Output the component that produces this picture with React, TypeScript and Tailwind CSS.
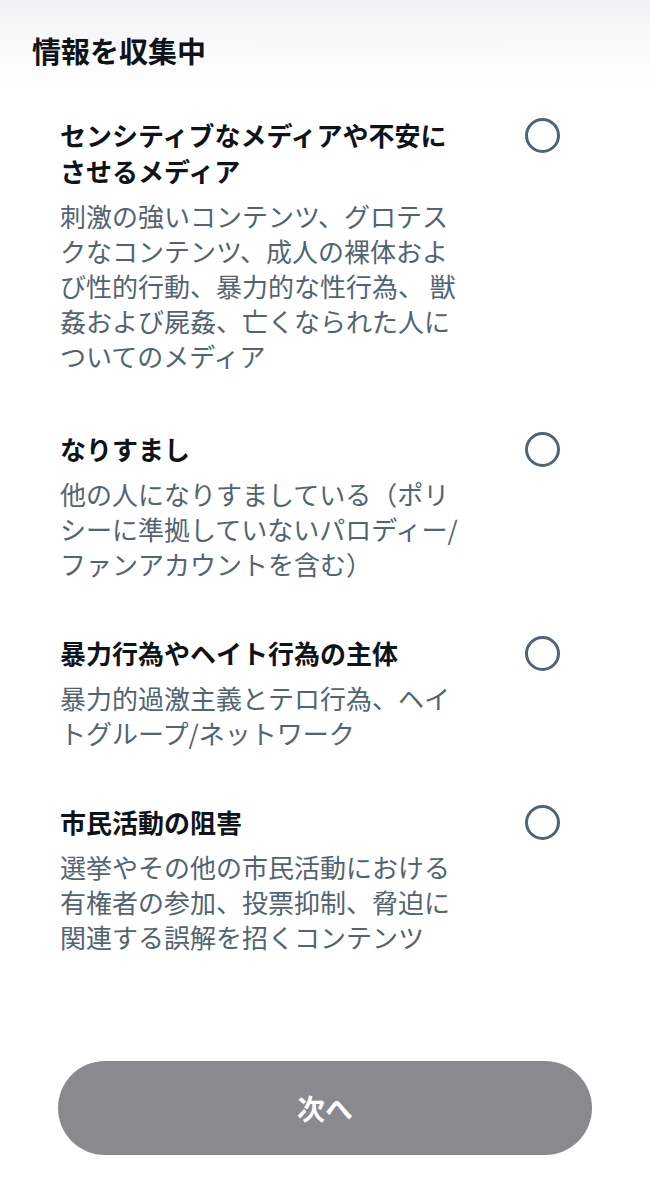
import React from 'react';

const items = [
  {
    title: ['センシティブなメディアや不安に', 'させるメディア'],
    desc: [
      '刺激の強いコンテンツ、グロテス',
      'クなコンテンツ、成人の裸体およ',
      'び性的行動、暴力的な性行為、 獣',
      '姦および屍姦、亡くなられた人に',
      'ついてのメディア',
    ],
  },
  {
    title: ['なりすまし'],
    desc: ['他の人になりすましている（ポリ', 'シーに準拠していないパロディー/', 'ファンアカウントを含む）'],
  },
  {
    title: ['暴力行為やヘイト行為の主体'],
    desc: ['暴力的過激主義とテロ行為、ヘイ', 'トグループ/ネットワーク'],
  },
  {
    title: ['市民活動の阻害'],
    desc: ['選挙やその他の市民活動における', '有権者の参加、投票抑制、脅迫に', '関連する誤解を招くコンテンツ'],
  },
];

export default function App() {
  return (
    <div className="w-[650px] h-[1199px] bg-white flex flex-col font-['Noto_Sans_CJK_JP',sans-serif] overflow-hidden">
      {/* header */}
      <div className="bg-gradient-to-b from-[#f1f2f3] via-[#f9f9fa] to-white pt-8 pl-8 pb-[22px]">
        <h1 className="text-[29px] leading-[36px] font-bold text-[#0f1419]">情報を収集中</h1>
      </div>

      {/* options */}
      <div className="flex flex-col gap-[54px] pl-[60px] pr-[90px] pt-[27px]">
        {items.map((item, i) => (
          <div key={i} className={i === 0 ? 'flex justify-between items-start pb-[4px]' : 'flex justify-between items-start'}>
            <div className="flex flex-col gap-[9px]">
              <div className="text-[26px] leading-[36px] font-bold text-[#0f1419] whitespace-nowrap">
                {item.title.map((l, j) => (
                  <div key={j}>{l}</div>
                ))}
              </div>
              <div className="text-[26px] leading-[35px] text-[#536471] whitespace-pre">
                {item.desc.map((l, j) => (
                  <div key={j}>{l}</div>
                ))}
              </div>
            </div>
            <div className="w-[35px] h-[35px] mt-[0.5px] rounded-full border-[3px] border-[#536471] shrink-0" />
          </div>
        ))}
      </div>

      {/* footer button */}
      <div className="mt-auto px-[58px] pb-[44px]">
        <button className="w-full h-[94px] rounded-full bg-[#898a8e] text-white text-[28px] font-bold">
          次へ
        </button>
      </div>
    </div>
  );
}
